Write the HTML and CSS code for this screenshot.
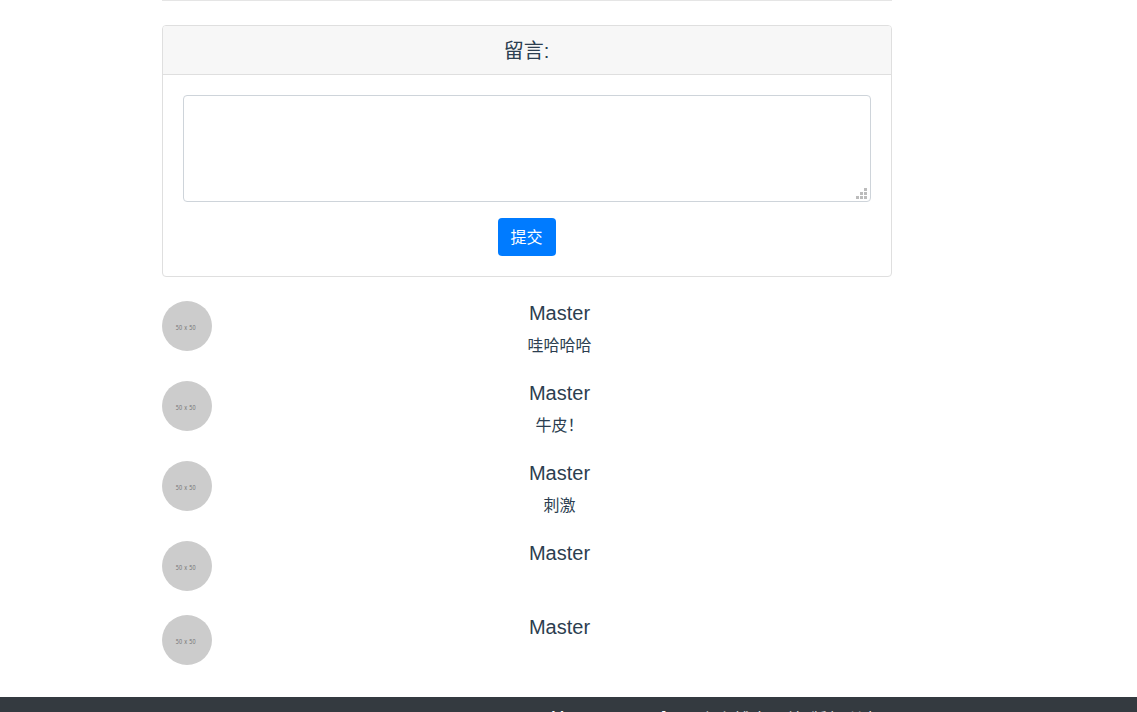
FILE: index.html
```
<!DOCTYPE html>
<html lang="zh-CN">
<head>
<meta charset="utf-8">
<title>留言</title>
<link rel="stylesheet" href="styles.css">
</head>
<body>
<main class="content">
  <hr class="rule">
  <section class="card">
    <h5 class="card-header">留言:</h5>
    <form class="card-body">
      <div class="field">
        <textarea class="message" aria-label="留言"></textarea>
        <svg class="grip" viewBox="0 0 11 11" aria-hidden="true"><path d="M8 0h3v3H8zM4 4h3v3H4zM8 4h3v3H8zM0 8h3v3H0zM4 8h3v3H4zM8 8h3v3H8z"/></svg>
      </div>
      <button class="submit" type="button">提交</button>
    </form>
  </section>
  <article class="comment"><div class="avatar"><span class="size">50 x 50</span></div><div class="comment-body"><h5 class="name">Master</h5><p class="text">哇哈哈哈</p></div></article>
  <article class="comment"><div class="avatar"><span class="size">50 x 50</span></div><div class="comment-body"><h5 class="name">Master</h5><p class="text">牛皮！</p></div></article>
  <article class="comment"><div class="avatar"><span class="size">50 x 50</span></div><div class="comment-body"><h5 class="name">Master</h5><p class="text">刺激</p></div></article>
  <article class="comment"><div class="avatar"><span class="size">50 x 50</span></div><div class="comment-body"><h5 class="name">Master</h5></div></article>
  <article class="comment"><div class="avatar"><span class="size">50 x 50</span></div><div class="comment-body"><h5 class="name">Master</h5></div></article>
</main>
<footer class="footer"><p class="footer-text"><span class="footer-name">Master</span><span class="footer-mark">[</span><span class="footer-note">个人博客网站 版权所有</span></p></footer>
</body>
</html>
```
FILE: styles.css
```
* { box-sizing: border-box; }
body {
  margin: 0;
  height: 712px;
  overflow: hidden;
  display: flex;
  flex-direction: column;
  background: #fff;
  color: #2c3e50;
  font: 16px/24px "Liberation Sans", "Noto Sans CJK SC", sans-serif;
  text-align: center;
}
.content { width: 730px; height: 697px; flex: none; margin-left: 162px; }
.rule { margin: 0 0 24px; border: 0; border-top: 1px solid #e5e5e5; }
.card { height: 252px; margin-bottom: 24px; border: 1px solid #dfdfdf; border-radius: 4px; }
.card-header {
  height: 49px;
  margin: 0;
  padding: 13px 21px 11px 20px;
  border-bottom: 1px solid #dfdfdf;
  border-radius: 3px 3px 0 0;
  background: #f7f7f7;
  font-size: 20px;
  font-weight: 400;
  line-height: 24px;
}
.card-body { padding: 20px; }
.field { position: relative; height: 107px; margin-bottom: 16px; }
.message {
  display: block;
  width: 100%;
  height: 107px;
  padding: 6px 12px;
  border: 1px solid #ced4da;
  border-radius: 4px;
  resize: none;
  font: inherit;
}
.grip { position: absolute; right: 4px; bottom: 3px; width: 11px; height: 11px; fill: #bcbcbc; }
.submit {
  width: 58px;
  height: 38px;
  padding: 2px 1px 0 0;
  border: 0;
  border-radius: 4px;
  background: #007bff;
  color: #fff;
  font: inherit;
}
.comment { display: flex; min-height: 50px; margin-bottom: 24px; }
.avatar {
  width: 50px;
  height: 50px;
  margin-right: 15px;
  padding-right: 2px;
  border-radius: 50%;
  background: #ccc;
  color: #777;
  font: 7px/53px "Noto Sans", sans-serif;
}
.size { display: inline-block; transform: scaleX(.78); white-space: nowrap; word-spacing: 1px; }
.comment-body { flex: 1; }
.name { margin: 0 0 8px; font-size: 20px; font-weight: 400; line-height: 24px; }
.text { margin: 0 0 -1px; padding-top: 1px; }
.footer { height: 15px; flex: none; overflow: hidden; background: #343a40; color: #fff; }
.footer-text { display: flex; margin: 9px 0 0 551px; text-align: left; }
.footer-name { width: 110px; }
.footer-mark { width: 38px; }
.footer-note { padding-top: 2px; letter-spacing: 1.6px; white-space: nowrap; }
```
